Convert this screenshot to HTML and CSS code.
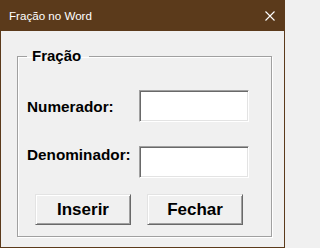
FILE: index.html
```html
<!DOCTYPE html>
<html lang="pt">
<head>
<meta charset="utf-8">
<title>Fração no Word</title>
<link rel="stylesheet" href="styles.css">
</head>
<body>
<div class="window">
  <div class="titlebar">
    <span class="title">Fração no Word</span>
    <svg class="close" width="10" height="10" viewBox="0 0 10 10"><path d="M0.5 0.5 L9.5 9.5 M9.5 0.5 L0.5 9.5" stroke="#fff" stroke-width="1.1" fill="none"/></svg>
  </div>
  <div class="client">
    <fieldset class="group">
      <legend class="legend">Fração</legend>
      <div class="form">
        <label class="label" for="num">Numerador:</label>
        <input class="field" id="num" type="text">
        <label class="label label-top" for="den">Denominador:</label>
        <input class="field" id="den" type="text">
      </div>
      <div class="buttons">
        <button class="btn" type="button">Inserir</button>
        <button class="btn" type="button">Fechar</button>
      </div>
    </fieldset>
  </div>
</div>
</body>
</html>
```

FILE: styles.css
```css
html, body {
  margin: 0;
  padding: 0;
  background: #f0f0f0;
}
.window {
  width: 285px;
  height: 248px;
  box-sizing: border-box;
  background: #5b3a1b;
  padding: 0 1px 1px 1px;
  display: flex;
  flex-direction: column;
}
.titlebar {
  height: 31px;
  flex: none;
  display: flex;
  align-items: center;
  justify-content: space-between;
  padding: 0 9px 0 8px;
}
.title {
  font-family: "Liberation Sans", Arial, sans-serif;
  font-size: 11.6px;
  color: #fff;
  line-height: 14px;
}
.close {
  display: block;
}
.client {
  flex: 1;
  background: #f0f0f0;
  padding: 16px 0 0 16px;
}
.group {
  margin: 0;
  width: 255px;
  box-sizing: border-box;
  border: 1px solid #a0a0a0;
  box-shadow: inset 1px 1px 0 #fff, 1px 1px 0 #fff;
  padding: 0 0 11px 9px;
  min-inline-size: 0;
}
.legend {
  font-family: "Liberation Sans", Arial, sans-serif;
  font-weight: bold;
  font-size: 15px;
  line-height: 18px;
  color: #000;
  padding: 0 8px 0 5px;
}
.form {
  margin-top: 25px;
  display: grid;
  grid-template-columns: 112px 110px;
  row-gap: 24px;
  align-items: start;
}
.label {
  font-family: "Liberation Sans", Arial, sans-serif;
  font-weight: bold;
  font-size: 15.3px;
  line-height: 18px;
  color: #000;
  margin-top: 8px;
  white-space: nowrap;
}
.label-top {
  margin-top: 0;
}
.field {
  width: 110px;
  height: 32px;
  box-sizing: border-box;
  margin: 0;
  padding: 0 3px;
  background: #fff;
  border: 1px solid;
  border-color: #a0a0a0 #fff #fff #a0a0a0;
  box-shadow: inset 1px 1px 0 #696969, inset -1px -1px 0 #e3e3e3;
  outline: none;
}
.buttons {
  display: flex;
  gap: 16px;
  margin: 16px 0 0 8px;
}
.btn {
  width: 96px;
  height: 31px;
  box-sizing: border-box;
  margin: 0;
  padding: 0;
  background: #f0f0f0;
  border: 1px solid;
  border-color: #e3e3e3 #696969 #696969 #e3e3e3;
  box-shadow: inset 1px 1px 0 #fff, inset -1px -1px 0 #a0a0a0;
  font-family: "Liberation Sans", Arial, sans-serif;
  font-weight: bold;
  font-size: 17px;
  color: #000;
  line-height: 29px;
}
```
